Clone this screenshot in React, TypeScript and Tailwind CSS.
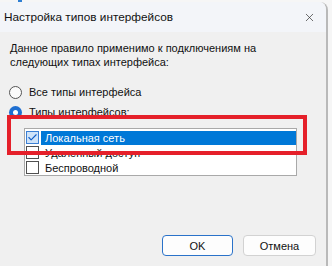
import { Check, X } from 'lucide-react'

const font = { fontFamily: '"Liberation Sans", "Noto Sans", sans-serif' }

const Radio = ({ checked, label }: { checked?: boolean; label: string }) => (
	<div className="flex h-[14px] items-center">
		<div className="ml-[9px] flex h-[13px] w-[13px] items-center justify-center rounded-full">
			{checked ? (
				<div className="flex h-[13px] w-[13px] items-center justify-center rounded-full bg-[#1f6fd1]">
					<div className="h-[5px] w-[5px] rounded-full bg-white" />
				</div>
			) : (
				<div className="h-[13px] w-[13px] rounded-full border border-[#555] bg-[#fbfbfb]" />
			)}
		</div>
		<span className="ml-[7px]">{label}</span>
	</div>
)

const ListRow = ({ label, checked, selected }: { label: string; checked?: boolean; selected?: boolean }) => (
	<div className="flex h-[15px] items-center">
		<div
			className={
				checked
					? 'ml-[1px] flex h-[13px] w-[13px] items-center justify-center border border-[#3b7fd4] bg-[#cfe3f9]'
					: 'ml-[1px] h-[13px] w-[13px] border border-[#505050] bg-white'
			}
		>
			{checked && <Check className="h-[11px] w-[11px] text-[#1560c8]" strokeWidth={2.5} />}
		</div>
		<div
			className={
				selected
					? 'ml-[2px] flex h-[14px] flex-1 items-center bg-[#0078d7] pl-[4px] text-white'
					: 'ml-[2px] flex h-[14px] flex-1 items-center pl-[4px]'
			}
		>
			{label}
		</div>
	</div>
)

export default function App() {
	return (
		<div className="relative h-[266px] w-[332px] overflow-hidden bg-[#f6f6f6] text-[11px] leading-[14px] text-[#111]" style={font}>
			<div className="absolute left-[18px] top-0 h-[2px] w-[4px] bg-[#2f7fd3]" />
			<div className="mt-[2px] flex h-[264px] w-[328px] flex-col overflow-hidden rounded-tr-[8px] border-r-[2px] border-[#b9b9b9] bg-[#f0f0f0]">
				{/* Title bar */}
				<div className="flex h-[30px] shrink-0 items-center justify-between bg-[#f3f5f9] pl-[4px] pr-[10px]">
					<span className="text-[11.8px]">Настройка типов интерфейсов</span>
					<X className="h-[13px] w-[13px] text-[#333]" strokeWidth={1.3} />
				</div>

				{/* Body */}
				<div className="relative flex flex-1 flex-col">
					<p className="pl-[10px] pt-[9px]">
						Данное правило применимо к подключениям на
						<br />
						следующих типах интерфейса:
					</p>

					<div className="mt-[16px] flex flex-col gap-[6px]">
						<Radio label="Все типы интерфейса" />
						<Radio checked label="Типы интерфейсов:" />
					</div>

					<div className="ml-[24px] mt-[9px] h-[48px] w-[273px] border border-[#a9a9a9] bg-white pt-[1px]">
						<ListRow label="Локальная сеть" checked selected />
						<ListRow label="Удаленный доступ" />
						<ListRow label="Беспроводной" />
					</div>

					<div className="mt-auto flex justify-end gap-[10px] pb-[10px] pr-[10px]">
						<button className="h-[21px] w-[71px] rounded-[4px] border border-[#2a72c9] bg-[#fdfdfd]">OK</button>
						<button className="h-[21px] w-[73px] rounded-[4px] border border-[#d2d2d2] bg-[#fdfdfd]">Отмена</button>
					</div>

					{/* Red annotation frame */}
					<div className="absolute left-[7px] top-[83px] h-[40px] w-[300px] border-[4px] border-[#e5202a]" />
				</div>
			</div>
		</div>
	)
}
